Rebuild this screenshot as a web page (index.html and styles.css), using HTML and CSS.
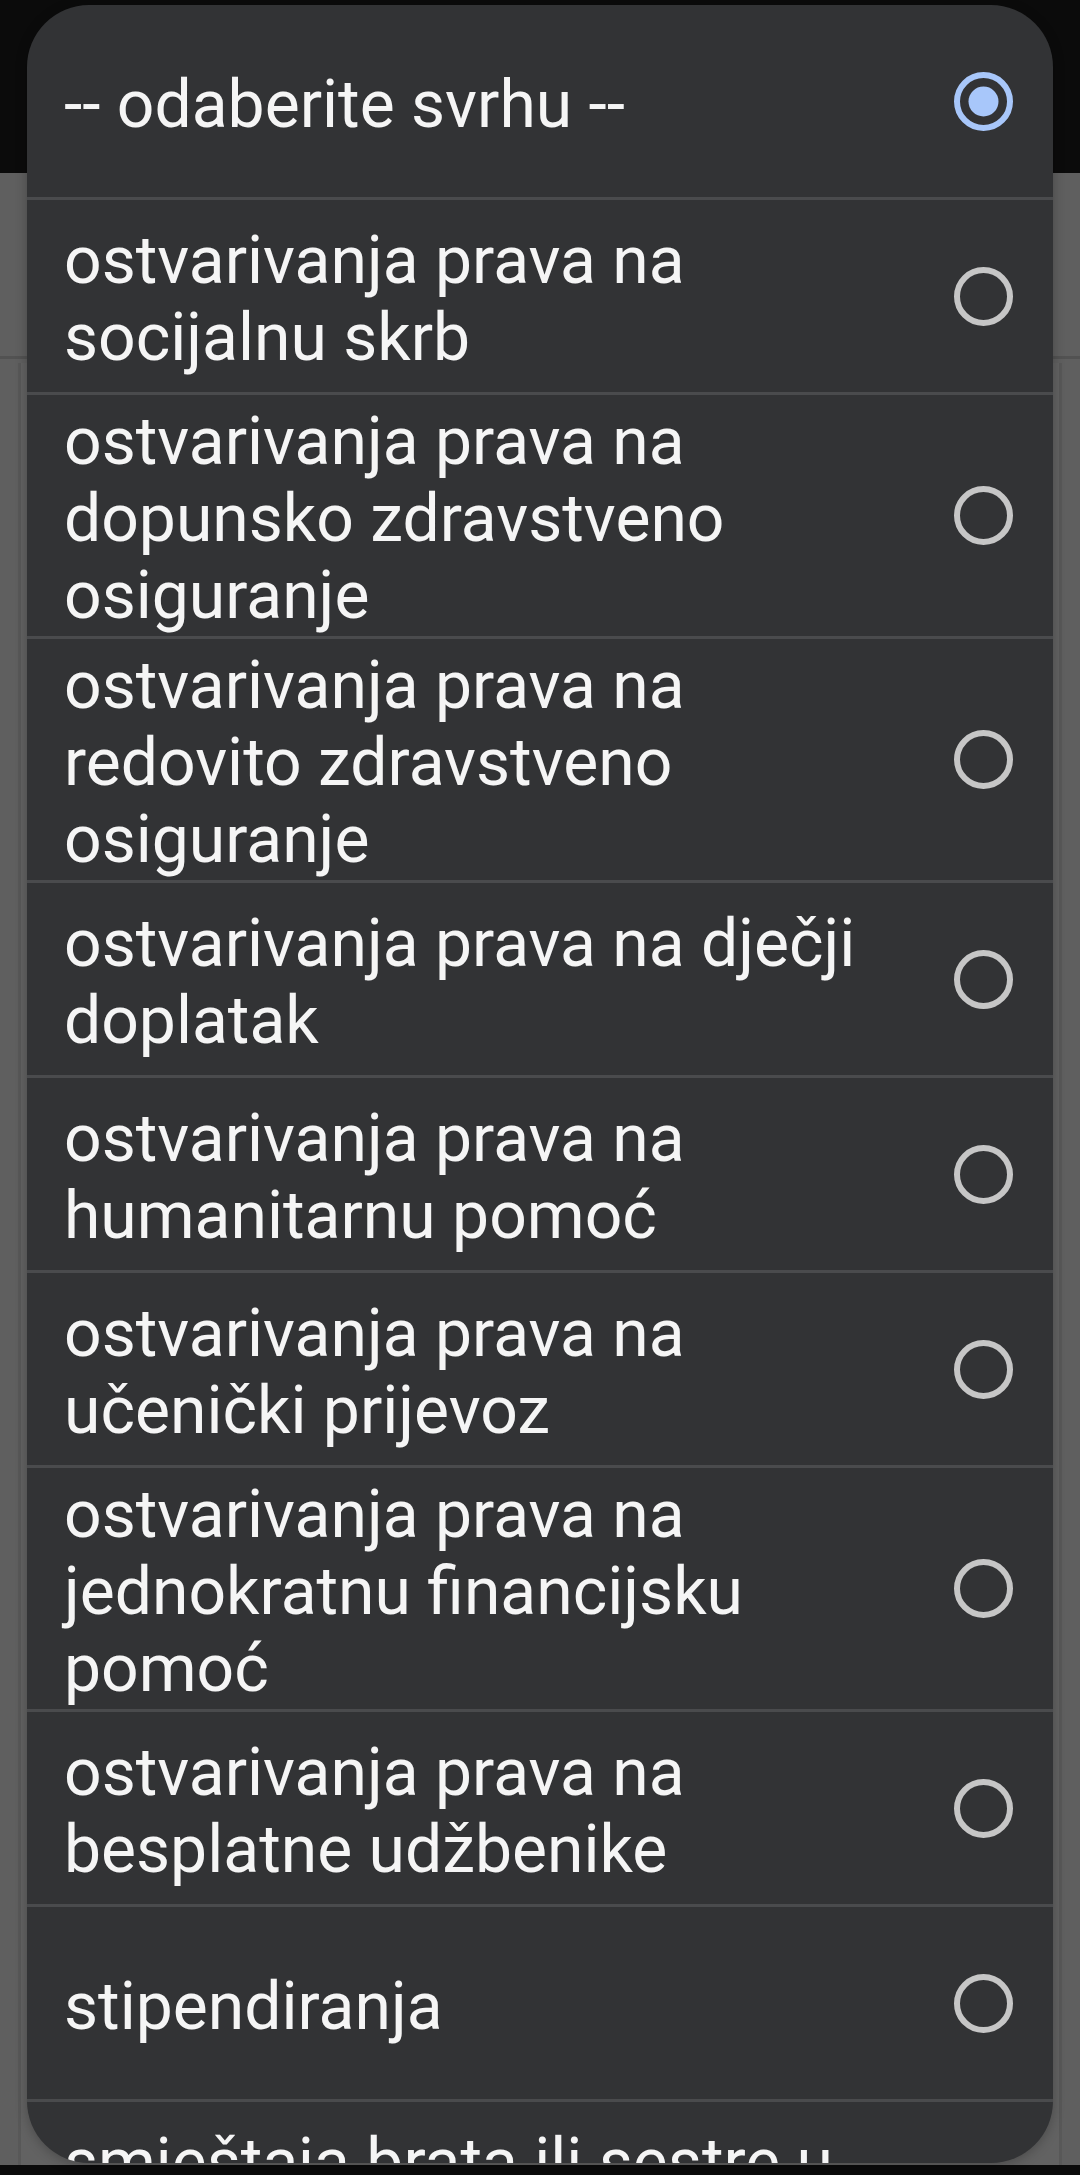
FILE: index.html
```html
<!DOCTYPE html>
<html lang="hr">
<head>
  <meta charset="UTF-8" />
  <meta name="viewport" content="width=device-width, initial-scale=1.0" />
  <title>Odaberite svrhu</title>
  <link rel="stylesheet" href="styles.css">
</head>
<body>
  <!-- zatamnjena stranica ispod dijaloga -->
  <div class="backdrop">
    <div class="status-bar"></div>
    <div class="page-header"></div>
    <div class="page-body">
      <div class="page-card"></div>
    </div>
    <div class="nav-bar"></div>
  </div>

  <!-- Dijalog za odabir svrhe -->
  <div class="picker">
    <ul class="option-list">
      <li class="option selected">
        <span class="option-text">-- odaberite svrhu --</span>
        <svg class="radio" viewBox="0 0 59 59"><circle cx="29.5" cy="29.5" r="26.5" /><circle class="dot" cx="29.5" cy="29.5" r="15" /></svg>
      </li>
      <li class="option">
        <span class="option-text">ostvarivanja prava na socijalnu skrb</span>
        <svg class="radio" viewBox="0 0 59 59"><circle cx="29.5" cy="29.5" r="26.5" /></svg>
      </li>
      <li class="option">
        <span class="option-text">ostvarivanja prava na dopunsko zdravstveno osiguranje</span>
        <svg class="radio" viewBox="0 0 59 59"><circle cx="29.5" cy="29.5" r="26.5" /></svg>
      </li>
      <li class="option">
        <span class="option-text">ostvarivanja prava na redovito zdravstveno osiguranje</span>
        <svg class="radio" viewBox="0 0 59 59"><circle cx="29.5" cy="29.5" r="26.5" /></svg>
      </li>
      <li class="option">
        <span class="option-text">ostvarivanja prava na dječji doplatak</span>
        <svg class="radio" viewBox="0 0 59 59"><circle cx="29.5" cy="29.5" r="26.5" /></svg>
      </li>
      <li class="option">
        <span class="option-text">ostvarivanja prava na humanitarnu pomoć</span>
        <svg class="radio" viewBox="0 0 59 59"><circle cx="29.5" cy="29.5" r="26.5" /></svg>
      </li>
      <li class="option">
        <span class="option-text">ostvarivanja prava na učenički prijevoz</span>
        <svg class="radio" viewBox="0 0 59 59"><circle cx="29.5" cy="29.5" r="26.5" /></svg>
      </li>
      <li class="option">
        <span class="option-text">ostvarivanja prava na jednokratnu financijsku pomoć</span>
        <svg class="radio" viewBox="0 0 59 59"><circle cx="29.5" cy="29.5" r="26.5" /></svg>
      </li>
      <li class="option">
        <span class="option-text">ostvarivanja prava na besplatne udžbenike</span>
        <svg class="radio" viewBox="0 0 59 59"><circle cx="29.5" cy="29.5" r="26.5" /></svg>
      </li>
      <li class="option">
        <span class="option-text">stipendiranja</span>
        <svg class="radio" viewBox="0 0 59 59"><circle cx="29.5" cy="29.5" r="26.5" /></svg>
      </li>
      <li class="option">
        <span class="option-text">smještaja brata ili sestre u učenički ili studentski dom</span>
        <svg class="radio" viewBox="0 0 59 59"><circle cx="29.5" cy="29.5" r="26.5" /></svg>
      </li>
    </ul>
  </div>
</body>
</html>
```

FILE: styles.css
```css
html, body {
  margin: 0;
  padding: 0;
  height: 100%;
}

body {
  font-family: "Roboto", "Noto Sans", sans-serif;
  background-color: #5f5f5f;
  overflow: hidden;
}

.backdrop {
  display: flex;
  flex-direction: column;
  height: 2175px;
}

.status-bar {
  height: 173px;
  background-color: #0b0b0b;
}

.page-header {
  height: 183px;
  background-color: #5f5f5f;
  border-bottom: 3px solid #525252;
}

.page-body {
  flex: 1;
  padding: 4px 18px 0;
}

.page-card {
  height: 100%;
  border-left: 3px solid #585858;
  border-right: 3px solid #585858;
  background-color: #626262;
}

.nav-bar {
  height: 10px;
  background-color: #0b0b0b;
}

/* Dijalog */
.picker {
  position: fixed;
  top: 5px;
  left: 27px;
  width: 1026px;
  height: 2158px;
  background-color: #323335;
  border-radius: 62px;
  overflow: hidden;
  box-shadow: 0 2px 12px rgba(0,0,0,0.25);
}

.option-list {
  list-style: none;
  margin: 0;
  padding: 0;
}

.option {
  box-sizing: border-box;
  display: flex;
  align-items: center;
  gap: 24px;
  min-height: 195px;
  padding: 8px 40px 2px 37px;
  border-bottom: 3px solid #4a4b4d;
}

.option-text {
  flex: 1;
  color: #f5f5f5;
  font-size: 66px;
  line-height: 77px;
}

.radio {
  flex: none;
  width: 59px;
  height: 59px;
  margin-bottom: 6px;
}

.radio circle {
  fill: none;
  stroke: #c6c6c6;
  stroke-width: 6;
}

.selected .radio circle {
  stroke: #a8c7fa;
}

.selected .radio .dot {
  fill: #a8c7fa;
  stroke: none;
}
```
